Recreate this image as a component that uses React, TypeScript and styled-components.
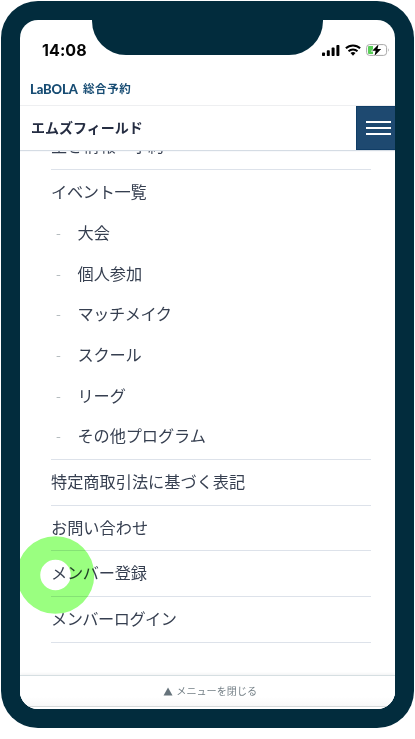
import React from "react";
import styled, { createGlobalStyle } from "styled-components";

const Global = createGlobalStyle`
  * { box-sizing: border-box; }
  body { margin: 0; background: #fff; font-family: "Noto Sans CJK JP", sans-serif; }
`;

const Stage = styled.main`
  width: 415px;
  height: 739px;
  padding: 1.4px 1px 0;
`;

const Phone = styled.div`
  position: relative;
  height: 727px;
  width: 413px;
  padding: 18.6px 18.6px 19.4px 19px;
  border-radius: 37px;
  background: #022c3d;
`;

const Screen = styled.div`
  height: 100%;
  display: flex;
  flex-direction: column;
  overflow: hidden;
  border-radius: 18px;
  background: #fff;
`;

const Notch = styled.div`
  position: absolute;
  top: 18px;
  left: 90.5px;
  width: 231.5px;
  height: 36px;
  border-radius: 0 0 34px 34px;
  background: #022c3d;
`;

const StatusBar = styled.div`
  flex: none;
  height: 60px;
  padding: 0 5px 0 22px;
  display: flex;
  align-items: center;
  justify-content: space-between;
`;

const Clock = styled.span`
  font: 700 16px/20px Inter, sans-serif;
  letter-spacing: 0.1px;
  color: #050505;
`;

const StatusIcons = styled.div`
  display: flex;
  align-items: center;
  gap: 5px;
  svg { display: block; }
`;

const BrandRow = styled.header`
  flex: none;
  height: 26px;
  padding: 0 10px 9px;
  display: flex;
  align-items: center;
  gap: 5px;
  color: #174c73;
  border-bottom: 1px solid #eeeff1;
`;

const Logo = styled.span`
  width: 48px;
  font: 900 13px/16px Lato, sans-serif;
  letter-spacing: -0.1px;
  padding-top: 2px;
`;

const Service = styled.span`
  font-size: 11.5px;
  line-height: 18px;
  font-weight: 700;
  letter-spacing: 0.6px;
`;

const TitleBar = styled.div`
  position: relative;
  z-index: 1;
  flex: none;
  height: 44.4px;
  padding-left: 11px;
  display: flex;
  align-items: stretch;
  justify-content: space-between;
  background: #fff;
  box-shadow: 0 1px 1px #d5dce4;
`;

const Title = styled.h1`
  margin: 0;
  font-size: 14px;
  line-height: 42px;
  font-weight: 700;
  color: #252d42;
`;

const MenuButton = styled.button`
  width: 39.4px;
  padding: 0 0 0 4px;
  display: flex;
  flex-direction: column;
  align-items: center;
  justify-content: center;
  gap: 4px;
  border: 1px solid #103d66;
  border-right: 0;
  background: #1e4970;
`;

const Bar = styled.span`
  width: 25px;
  height: 2px;
  background: #fff;
`;

const MenuViewport = styled.nav`
  flex: 1;
  min-height: 0;
  padding: 0 24.4px 0 31px;
  overflow: hidden;
`;

const Menu = styled.ul`
  margin: -26.3px 0 0;
  padding: 0;
  list-style: none;
  color: #363f50;
`;

const Item = styled.li`
  border-bottom: 1px solid #dde2ea;
  font-size: 16.2px;
`;

const Label = styled.div<{ $tracking?: number }>`
  height: 44.65px;
  line-height: 43.4px;
  white-space: nowrap;
  letter-spacing: ${({ $tracking = 0 }) => $tracking}px;
`;

const SubList = styled.ul`
  margin: -2.1px 0 0;
  padding: 0 0 3.2px;
  list-style: none;
`;

const SubItem = styled.li<{ $tracking?: number }>`
  height: 40.6px;
  display: flex;
  align-items: center;
  padding-left: 5px;
  line-height: 40.6px;
  letter-spacing: ${({ $tracking = 0 }) => $tracking}px;
  &::before {
    content: "-";
    width: 21.5px;
    color: #b5bcbf;
    font-size: 14px;
  }
`;

const CloseBar = styled.footer`
  flex: none;
  height: 34px;
  display: flex;
  flex-direction: column;
  border-top: 1px solid #d6dfe2;
  box-shadow: 0 -1px 3px #f0f1f2;
  background: #fff;
`;

const CloseLabel = styled.button`
  height: 31px;
  display: flex;
  align-items: center;
  justify-content: center;
  gap: 3px;
  padding: 0 0 0 5px;
  border: 0;
  border-bottom: 1px solid #d5d9da;
  background: linear-gradient(#fff 70%, #f7f8f8);
  color: #758087;
  font: 10.1px/20px "Noto Sans CJK JP", sans-serif;
`;

const TapMarker = styled.div`
  position: absolute;
  left: 19px;
  top: 534.2px;
  width: 75px;
  height: 78px;
  overflow: hidden;
  mix-blend-mode: multiply;
  svg { display: block; }
`;

type Entry = { label: string; tracking?: number; children?: Entry[] };

const items: Entry[] = [
  { label: "空き情報・予約" },
  {
    label: "イベント一覧",
    tracking: -0.3,
    children: [
      { label: "大会" },
      { label: "個人参加" },
      { label: "マッチメイク", tracking: -0.45 },
      { label: "スクール", tracking: -0.2 },
      { label: "リーグ", tracking: -0.1 },
      { label: "その他プログラム", tracking: -0.1 },
    ],
  },
  { label: "特定商取引法に基づく表記" },
  { label: "お問い合わせ" },
  { label: "メンバー登録", tracking: -0.25 },
  { label: "メンバーログイン", tracking: -0.5 },
];

const Signal = () => (
  <svg width="18" height="12" viewBox="0 0 18 12">
    <rect x="0" y="8.5" width="3" height="3.5" rx=".8" />
    <rect x="4.8" y="6.3" width="3" height="5.7" rx=".8" />
    <rect x="9.6" y="3.6" width="3" height="8.4" rx=".8" />
    <rect x="14.4" y="1" width="3" height="11" rx=".8" />
  </svg>
);

const Wifi = () => (
  <svg width="16" height="12" viewBox="0 0 16 12" fill="none" stroke="#000" strokeWidth="2">
    <path d="M.9 4.3a10.2 10.2 0 0 1 14.2 0M3.5 7.2a6.5 6.5 0 0 1 9 0" />
    <path d="M5.5 9.1a3.6 3.6 0 0 1 5 0L8 11.7Z" fill="#000" stroke="none" />
  </svg>
);

const Battery = () => (
  <svg width="24" height="12" viewBox="0 0 24 12">
    <rect x=".6" y=".6" width="20" height="10.8" rx="3" fill="#fff" stroke="#a7a7a7" />
    <path d="M22 4.2q1.7 1.8 0 3.6z" fill="#a7a7a7" />
    <path d="M2 3q0-1 1-1h4v8H3q-1 0-1-1z" fill="#59ce58" />
    <path d="M12.6.3 6.2 6.8h3.5L8.4 11.9 15.2 5.1h-3.7z" stroke="#fff" strokeWidth="1.2" paintOrder="stroke" />
  </svg>
);

export default function App() {
  return (
    <>
      <Global />
      <Stage>
        <Phone>
          <Screen>
            <StatusBar>
              <Clock>14:08</Clock>
              <StatusIcons><Signal /><Wifi /><Battery /></StatusIcons>
            </StatusBar>
            <BrandRow><Logo>LaBOLA</Logo><Service>総合予約</Service></BrandRow>
            <TitleBar>
              <Title>エムズフィールド</Title>
              <MenuButton aria-label="メニュー"><Bar /><Bar /><Bar /></MenuButton>
            </TitleBar>
            <MenuViewport>
              <Menu>
                {items.map((item) => (
                  <Item key={item.label}>
                    <Label $tracking={item.tracking}>{item.label}</Label>
                    {item.children && (
                      <SubList>
                        {item.children.map((sub) => (
                          <SubItem key={sub.label} $tracking={sub.tracking}>{sub.label}</SubItem>
                        ))}
                      </SubList>
                    )}
                  </Item>
                ))}
              </Menu>
            </MenuViewport>
            <CloseBar>
              <CloseLabel><svg width="10" height="9" viewBox="0 0 10 9"><path d="m5 .5 4.5 8h-9z" fill="#66737b" /></svg>メニューを閉じる</CloseLabel>
            </CloseBar>
          </Screen>
          <Notch />
          <TapMarker>
            <svg width="75" height="78" viewBox="0 0 75 78">
              <circle cx="35.5" cy="39" r="27" fill="none" stroke="#9aff80" strokeWidth="23.5" />
            </svg>
          </TapMarker>
        </Phone>
      </Stage>
    </>
  );
}
